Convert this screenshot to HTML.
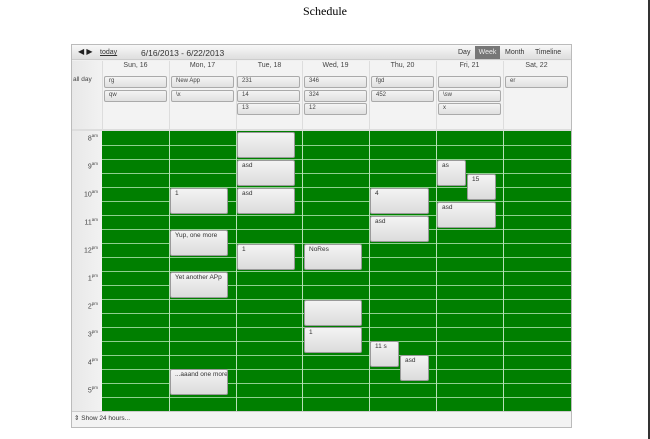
<!DOCTYPE html>
<html><head><style>
*{margin:0;padding:0;box-sizing:border-box}
body{width:650px;height:439px;background:#fff;position:relative;overflow:hidden;font-family:"Liberation Sans",sans-serif;font-size:7px;color:#333}
.a{position:absolute}
.ev{position:absolute;background:linear-gradient(#f4f4f4,#dcdcdc);border:1px solid #9a9a9a;border-radius:2px;padding:1px 4px;font-size:6.5px;color:#333;white-space:nowrap;overflow:hidden}
.ad{position:absolute;height:12px;background:linear-gradient(#f4f4f4,#e0e0e0);border:1px solid #aaa;border-radius:2px;padding:1px 4px;font-size:6px;color:#444}
.hl{position:absolute;left:102px;width:469px;height:1px;background:#8fd08f}
.vl{position:absolute;top:131px;height:280px;width:1px;background:#b7e0b7}
.tl{position:absolute;left:72px;width:30px;text-align:right;padding-right:4px;font-size:7px;color:#444}
.tl sup{font-size:4.5px}
.dh{position:absolute;top:62px;width:67px;text-align:center;font-size:7px;color:#444}
</style></head><body>
<div class="a" style="left:0;top:4px;width:650px;text-align:center;font-family:'Liberation Serif',serif;font-size:12px;color:#000">Schedule</div>
<div class="a" style="left:648px;top:0;width:2px;height:439px;background:#333"></div>

<div class="a" style="left:71px;top:44px;width:501px;height:384px;border:1px solid #bbb;background:#f0f0f0"></div>
<div class="a" style="left:72px;top:45px;width:499px;height:15px;background:linear-gradient(#f8f8f8,#dedede);border-bottom:1px solid #ccc"></div>
<div class="a" style="left:78px;top:47px;font-size:8px;color:#222">◀ ▶</div>
<div class="a" style="left:100px;top:49px;font-size:7px;text-decoration:underline;color:#333">today</div>
<div class="a" style="left:141px;top:48px;font-size:8.5px;color:#333">6/16/2013 - 6/22/2013</div>
<div class="a" style="left:458px;top:49px;font-size:7px">Day</div>
<div class="a" style="left:475px;top:46px;width:25px;height:13px;background:#777;color:#eee;font-size:7px;text-align:center;line-height:13px">Week</div>
<div class="a" style="left:505px;top:49px;font-size:7px">Month</div>
<div class="a" style="left:535px;top:49px;font-size:7px">Timeline</div>

<div class="a" style="left:72px;top:61px;width:30px;height:350px;background:linear-gradient(90deg,#e8e8e8,#f2f2f2)"></div>
<div class="a" style="left:73px;top:76px;font-size:6.5px;color:#444">all day</div>
<div class="a" style="left:102px;top:61px;width:469px;height:70px;background:#f3f3f3"></div>
<div class="a" style="left:72px;top:129px;width:499px;height:2px;background:#ddd"></div>

<div class="dh" style="left:102px">Sun, 16</div>
<div class="dh" style="left:169px">Mon, 17</div>
<div class="dh" style="left:236px">Tue, 18</div>
<div class="dh" style="left:302px">Wed, 19</div>
<div class="dh" style="left:369px">Thu, 20</div>
<div class="dh" style="left:436px">Fri, 21</div>
<div class="dh" style="left:503px">Sat, 22</div>

<div class="a" style="left:169px;top:61px;width:1px;height:70px;background:#ddd"></div>
<div class="a" style="left:236px;top:61px;width:1px;height:70px;background:#ddd"></div>
<div class="a" style="left:302px;top:61px;width:1px;height:70px;background:#ddd"></div>
<div class="a" style="left:369px;top:61px;width:1px;height:70px;background:#ddd"></div>
<div class="a" style="left:436px;top:61px;width:1px;height:70px;background:#ddd"></div>
<div class="a" style="left:503px;top:61px;width:1px;height:70px;background:#ddd"></div>
<div class="a" style="left:102px;top:61px;width:1px;height:70px;background:#ddd"></div>

<div class="ad" style="left:104px;top:76px;width:63px">rg</div>
<div class="ad" style="left:104px;top:90px;width:63px">qw</div>
<div class="ad" style="left:171px;top:76px;width:63px">New App</div>
<div class="ad" style="left:171px;top:90px;width:63px">\x</div>
<div class="ad" style="left:237px;top:76px;width:63px">231</div>
<div class="ad" style="left:237px;top:90px;width:63px">14</div>
<div class="ad" style="left:237px;top:103px;width:63px">13</div>
<div class="ad" style="left:304px;top:76px;width:63px">346</div>
<div class="ad" style="left:304px;top:90px;width:63px">324</div>
<div class="ad" style="left:304px;top:103px;width:63px">12</div>
<div class="ad" style="left:371px;top:76px;width:63px">fgd</div>
<div class="ad" style="left:371px;top:90px;width:63px">452</div>
<div class="ad" style="left:438px;top:76px;width:63px"></div>
<div class="ad" style="left:438px;top:90px;width:63px">\sw</div>
<div class="ad" style="left:438px;top:103px;width:63px">x</div>
<div class="ad" style="left:505px;top:76px;width:63px">er</div>

<div class="a" style="left:102px;top:131px;width:469px;height:280px;background:#007f00"></div>
<div class="hl" style="top:145px"></div><div class="hl" style="top:159px"></div>
<div class="hl" style="top:173px"></div><div class="hl" style="top:187px"></div>
<div class="hl" style="top:201px"></div><div class="hl" style="top:215px"></div>
<div class="hl" style="top:229px"></div><div class="hl" style="top:243px"></div>
<div class="hl" style="top:257px"></div><div class="hl" style="top:271px"></div>
<div class="hl" style="top:285px"></div><div class="hl" style="top:299px"></div>
<div class="hl" style="top:313px"></div><div class="hl" style="top:327px"></div>
<div class="hl" style="top:341px"></div><div class="hl" style="top:355px"></div>
<div class="hl" style="top:369px"></div><div class="hl" style="top:383px"></div>
<div class="hl" style="top:397px"></div>
<div class="vl" style="left:169px"></div><div class="vl" style="left:236px"></div>
<div class="vl" style="left:302px"></div><div class="vl" style="left:369px"></div>
<div class="vl" style="left:436px"></div><div class="vl" style="left:503px"></div>

<div class="tl" style="top:133px">8<sup>am</sup></div>
<div class="tl" style="top:161px">9<sup>am</sup></div>
<div class="tl" style="top:189px">10<sup>am</sup></div>
<div class="tl" style="top:217px">11<sup>am</sup></div>
<div class="tl" style="top:245px">12<sup>pm</sup></div>
<div class="tl" style="top:273px">1<sup>pm</sup></div>
<div class="tl" style="top:301px">2<sup>pm</sup></div>
<div class="tl" style="top:329px">3<sup>pm</sup></div>
<div class="tl" style="top:357px">4<sup>pm</sup></div>
<div class="tl" style="top:385px">5<sup>pm</sup></div>

<div class="ev" style="left:237px;top:132px;width:58px;height:26px"></div>
<div class="ev" style="left:237px;top:160px;width:58px;height:26px">asd</div>
<div class="ev" style="left:237px;top:188px;width:58px;height:26px">asd</div>
<div class="ev" style="left:237px;top:244px;width:58px;height:26px">1</div>
<div class="ev" style="left:170px;top:188px;width:58px;height:26px">1</div>
<div class="ev" style="left:170px;top:230px;width:58px;height:26px">Yup, one more</div>
<div class="ev" style="left:170px;top:272px;width:58px;height:26px">Yet another APp</div>
<div class="ev" style="left:170px;top:369px;width:58px;height:26px">...aaand one more</div>
<div class="ev" style="left:304px;top:244px;width:58px;height:26px">NoRes</div>
<div class="ev" style="left:304px;top:300px;width:58px;height:26px"></div>
<div class="ev" style="left:304px;top:327px;width:58px;height:26px">1</div>
<div class="ev" style="left:370px;top:188px;width:59px;height:26px">4</div>
<div class="ev" style="left:370px;top:216px;width:59px;height:26px">asd</div>
<div class="ev" style="left:370px;top:341px;width:29px;height:26px">11 s</div>
<div class="ev" style="left:400px;top:355px;width:29px;height:26px">asd</div>
<div class="ev" style="left:437px;top:160px;width:29px;height:26px">as</div>
<div class="ev" style="left:467px;top:174px;width:29px;height:26px">15</div>
<div class="ev" style="left:437px;top:202px;width:59px;height:26px">asd</div>

<div class="a" style="left:72px;top:411px;width:499px;height:16px;background:#f3f3f3;border-top:1px solid #ccc"></div>
<div class="a" style="left:74px;top:414px;font-size:6.5px;color:#333">⇕ Show 24 hours...</div>
</body></html>
